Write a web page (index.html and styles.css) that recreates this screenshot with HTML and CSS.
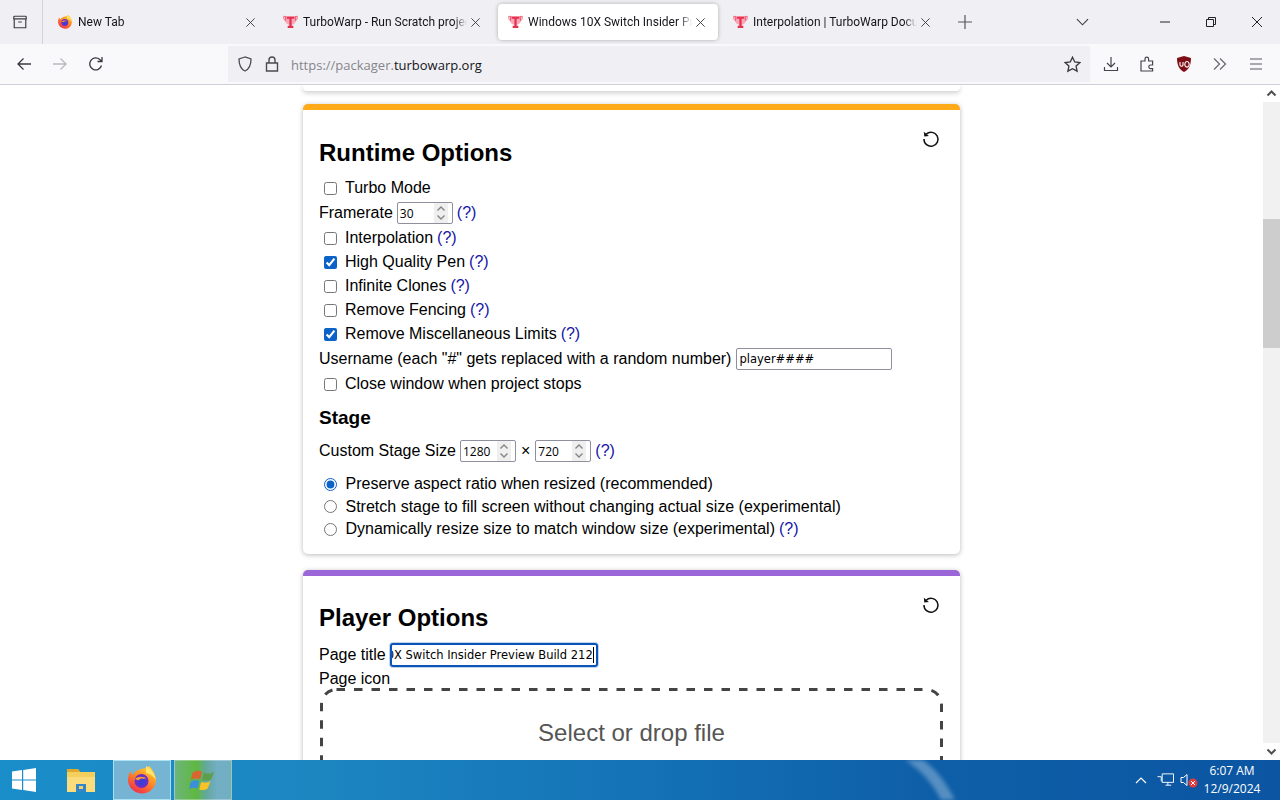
FILE: index.html
```html
<!DOCTYPE html>
<html lang="en">
<head>
<meta charset="utf-8">
<title>Windows 10X Switch Insider Preview Build 212</title>
<link rel="stylesheet" href="styles.css">
</head>
<body>
<svg class="defs" width="0" height="0" aria-hidden="true">
  <defs>
    <linearGradient id="fxg" x1="0.8" y1="0" x2="0.2" y2="1">
      <stop offset="0" stop-color="#ffd43a"/><stop offset="0.45" stop-color="#ff8a24"/><stop offset="1" stop-color="#f0254f"/>
    </linearGradient>
    <symbol id="firefox" viewBox="0 0 32 32">
      <path d="M23 2c3 3 7 8 7 14a14 14 0 1 1-28-1c0-3 1-6 3-8 0 2 1 3 2 4 1-3 4-5 8-6 4-1 6-1 8-3z" fill="url(#fxg)"/>
      <path d="M20 2c4 2 9 7 10 14-2-3-5-6-10-7z" fill="#ffe46a"/>
      <circle cx="15.500" cy="17" r="7" fill="#6a2fc4"/>
      <path d="M9 15c3-3 9-3 12 0-2-1-3 0-5 1-3 1-5 0-7-1z" fill="#ff9a2e"/>
      <circle cx="16" cy="18" r="3.600" fill="#3e3bd6"/>
    </symbol>
    <symbol id="trophy" viewBox="0 0 16 16">
      <path d="M2 1.500h12v4c0 3-2.500 5.500-6 5.500s-6-2.500-6-5.500z" fill="#f9a8b8"/>
      <path d="M.8 2h2v4.500C1.500 6.500.8 5 .8 2zM15.200 2h-2v4.500c1.300 0 2-1.500 2-4.500z" fill="none" stroke="#ef5b74"/>
      <path d="M4 2.500h8v2H9.200v7.500H11v2.500H5V12h1.800V4.500H4z" fill="#e5304f"/>
    </symbol>
    <symbol id="close" viewBox="0 0 12 12">
      <path d="M1.500 1.500l9 9M10.500 1.500l-9 9" fill="none" stroke="#3a3a40" stroke-width="1"/>
    </symbol>
    <symbol id="spin" viewBox="0 0 14 20">
      <path d="M3.500 7.500L7 4l3.500 3.500M3.500 12.500L7 16l3.500-3.500" fill="none" stroke="#858585" stroke-width="1.400"/>
    </symbol>
    <symbol id="reset" viewBox="0 0 18 18">
      <path d="M4.100 4.300A7 7 0 1 1 2 9" fill="none" stroke="#111" stroke-width="1.500"/>
      <path d="M1.800 1.800l.5 4.700 4.600-.6z" fill="#111"/>
    </symbol>
  </defs>
</svg>

<div class="browser">
  <div class="tabbar">
    <div class="tabgroup">
      <svg class="ico16" viewBox="0 0 18 18"><path d="M2.500 5.500h13v10h-13zM3 2.500h12a1 1 0 0 1 1 1v2H2v-2a1 1 0 0 1 1-1zM7 9h4" fill="none" stroke="#3a3a40" stroke-width="1.300"/></svg>
    </div>
    <div class="tabs">
      <div class="tab tab-first">
        <svg class="fav fav-fx"><use href="#firefox"/></svg>
        <span class="tab-title">New Tab</span>
        <svg class="tab-x"><use href="#close"/></svg>
      </div>
      <div class="tab">
        <svg class="fav"><use href="#trophy"/></svg>
        <span class="tab-title">TurboWarp - Run Scratch projects faster</span>
        <svg class="tab-x"><use href="#close"/></svg>
      </div>
      <div class="tab tab-active">
        <svg class="fav"><use href="#trophy"/></svg>
        <span class="tab-title">Windows 10X Switch Insider Preview Build 212</span>
        <svg class="tab-x"><use href="#close"/></svg>
      </div>
      <div class="tab">
        <svg class="fav"><use href="#trophy"/></svg>
        <span class="tab-title">Interpolation | TurboWarp Documentation</span>
        <svg class="tab-x"><use href="#close"/></svg>
      </div>
      <svg class="newtab" viewBox="0 0 14 14"><path d="M7 0v14M0 7h14" stroke="#55555c" stroke-width="1.200"/></svg>
    </div>
    <svg class="alltabs" viewBox="0 0 14 8"><path d="M1 1l6 6 6-6" fill="none" stroke="#3a3a40" stroke-width="1.200"/></svg>
    <div class="winctl">
      <svg class="ctl" viewBox="0 0 46 12"><path d="M18 6h10" stroke="#222" stroke-width="1"/></svg>
      <svg class="ctl" viewBox="0 0 46 12"><path d="M18.500 3.500h7v7h-7zM20.500 3.500v-2h7v7h-2" fill="#f0f0f4" stroke="#222" stroke-width="1"/></svg>
      <svg class="ctl" viewBox="0 0 46 12"><path d="M18 1l10 10M28 1L18 11" stroke="#222" stroke-width="1"/></svg>
    </div>
  </div>

  <div class="toolbar">
    <div class="navbtn"><svg class="ico16" viewBox="0 0 16 16"><path d="M15 8H2M7.500 2.500L2 8l5.500 5.500" fill="none" stroke="#3a3a40" stroke-width="1.300"/></svg></div>
    <div class="navbtn"><svg class="ico16" viewBox="0 0 16 16"><path d="M1 8h13M8.500 2.500L14 8l-5.500 5.500" fill="none" stroke="#b9b9be" stroke-width="1.300"/></svg></div>
    <div class="navbtn"><svg class="ico16" viewBox="0 0 16 16"><path d="M13.500 9.500A6 6 0 1 1 11.800 3.500L14 5.500M14 1v4.500H9.500" fill="none" stroke="#3a3a40" stroke-width="1.300"/></svg></div>
    <div class="urlbar">
      <svg class="url-shield" viewBox="0 0 16 16"><path d="M8 1L2 3c0 6 1.500 10 6 12 4.500-2 6-6 6-12z" fill="none" stroke="#4a4a50" stroke-width="1.300"/></svg>
      <svg class="url-lock" viewBox="0 0 14 16"><path d="M1.500 7h11v8h-11zM4 7V4a3 3 0 0 1 6 0v3" fill="none" stroke="#4a4a50" stroke-width="1.400"/></svg>
      <span class="url"><span class="url-dim">https://packager.</span>turbowarp.org</span>
      <svg class="url-star" viewBox="0 0 16 16"><path d="M8 1.200l2.100 4.400 4.800.6-3.500 3.300.9 4.800L8 12l-4.300 2.300.9-4.800L1.100 6.200l4.800-.6z" fill="none" stroke="#3a3a40" stroke-width="1.300"/></svg>
    </div>
    <div class="actions">
      <svg class="ico16" viewBox="0 0 16 16"><path d="M8 1v9.500M4 7l4 4 4-4M1.500 11v3.500h13V11" fill="none" stroke="#45454b" stroke-width="1.200"/></svg>
      <svg class="ico16" viewBox="0 0 16 16"><path d="M2 5h4V3a1.800 1.800 0 0 1 3.600 0v2h4v4h-2a1.800 1.800 0 0 0 0 3.600h2V15H2z" fill="none" stroke="#45454b" stroke-width="1.200"/></svg>
      <svg class="ico16" viewBox="0 0 16 16"><path d="M8 0l7 2c0 7-2 11.500-7 14C3 13.500 1 9 1 2z" fill="#7d0f14"/><path d="M4 6v2.800a1.500 1.500 0 0 0 3 0V6M11 5.500a2.200 2.800 0 1 0 .01 0z" stroke="#fff" stroke-width="1.100" fill="none"/></svg>
      <svg class="ico16" viewBox="0 0 16 16"><path d="M2 2.500L7.500 8 2 13.500M8 2.500L13.500 8 8 13.500" fill="none" stroke="#6b6b70" stroke-width="1.300"/></svg>
      <svg class="ico16" viewBox="0 0 16 16"><path d="M2 3h12M2 8h12M2 13h12" fill="none" stroke="#5a5a60" stroke-width="1.200"/></svg>
    </div>
  </div>

  <div class="viewport">
    <main class="page">
      <div class="card-prev"></div>

      <section class="card card-orange">
        <svg class="reset"><use href="#reset"/></svg>
        <h2 class="card-title">Runtime Options</h2>
        <label class="row check"><input type="checkbox"><span>Turbo Mode</span></label>
        <div class="row field">
          <span>Framerate</span>
          <span class="num"><span class="num-val">30</span><svg class="spin"><use href="#spin"/></svg></span>
          <a class="help">(?)</a>
        </div>
        <label class="row check"><input type="checkbox"><span>Interpolation</span><a class="help">(?)</a></label>
        <label class="row check"><input type="checkbox" checked><span>High Quality Pen</span><a class="help">(?)</a></label>
        <label class="row check"><input type="checkbox"><span>Infinite Clones</span><a class="help">(?)</a></label>
        <label class="row check"><input type="checkbox"><span>Remove Fencing</span><a class="help">(?)</a></label>
        <label class="row check"><input type="checkbox" checked><span>Remove Miscellaneous Limits</span><a class="help">(?)</a></label>
        <div class="row field field-user">
          <span>Username (each "#" gets replaced with a random number)</span>
          <input class="text-input" type="text" value="player####">
        </div>
        <label class="row check"><input type="checkbox"><span>Close window when project stops</span></label>

        <h3 class="sub-title">Stage</h3>
        <div class="row field">
          <span>Custom Stage Size</span>
          <span class="num"><span class="num-val">1280</span><svg class="spin"><use href="#spin"/></svg></span>
          <span class="times">×</span>
          <span class="num"><span class="num-val">720</span><svg class="spin"><use href="#spin"/></svg></span>
          <a class="help">(?)</a>
        </div>
        <div class="radios">
          <label class="row radio"><input type="radio" name="fit" checked><span>Preserve aspect ratio when resized (recommended)</span></label>
          <label class="row radio"><input type="radio" name="fit"><span>Stretch stage to fill screen without changing actual size (experimental)</span></label>
          <label class="row radio"><input type="radio" name="fit"><span>Dynamically resize size to match window size (experimental)</span><a class="help">(?)</a></label>
        </div>
      </section>

      <section class="card card-purple">
        <svg class="reset"><use href="#reset"/></svg>
        <h2 class="card-title">Player Options</h2>
        <div class="row field">
          <span>Page title</span>
          <span class="title-input"><span class="title-text">Windows 10X Switch Insider Preview Build 212</span></span>
        </div>
        <div class="row label-only">Page icon</div>
        <div class="dropzone">
          <svg class="dz-border" width="623" height="120"><rect x="1.500" y="1.500" width="620" height="117" rx="15" /></svg>
          Select or drop file
        </div>
      </section>
    </main>
    <div class="scrollbar">
      <svg class="sb-arrow" viewBox="0 0 17 17"><path d="M4.500 10.500L8.500 6.500l4 4" fill="none" stroke="#505050" stroke-width="2"/></svg>
      <div class="sb-track"><div class="sb-thumb"></div></div>
      <svg class="sb-arrow" viewBox="0 0 17 17"><path d="M4.500 6.500l4 4 4-4" fill="none" stroke="#505050" stroke-width="2"/></svg>
    </div>
  </div>

  <footer class="taskbar">
    <svg class="streak" viewBox="0 0 70 40"><path d="M0 0h18c14 10 24 24 32 40H36C28 24 16 10 0 0z" fill="#fff" opacity=".3"/></svg>
    <div class="start"><svg class="winlogo" viewBox="0 0 24 24"><path d="M0 3.500l10-1.400v9.300H0zM11.200 2L24 0v11.400H11.200zM0 12.600h10v9.300L0 20.500zM11.200 12.600H24V24l-12.800-2z" fill="#fff"/></svg></div>
    <div class="tb-btn tb-plain">
      <svg class="tb-ico" viewBox="0 0 32 32"><path d="M2 5h11l2 3h15v20H2z" fill="#f5cf5c"/><path d="M2 5h11l2 3H2z" fill="#e0a92c"/><path d="M2 13h28v15H2z" fill="#fbdc7c"/><path d="M11 20h10v8H11z" fill="#2f86c8"/><path d="M14 22h4v3h-4z" fill="#f5cf5c"/></svg>
    </div>
    <div class="tb-btn tb-active"><svg class="tb-ico"><use href="#firefox"/></svg></div>
    <div class="tb-btn tb-green">
      <svg class="tb-ico tb-flag" viewBox="0 0 32 32"><path d="M5 8c4-3 6-2 10-1l-2 8c-4-1-7-1-10 1z" fill="#d9652f"/><path d="M17 8c4 2 7 2 11-1l-3 8c-3 2-6 2-10 1z" fill="#5f9e4a"/><path d="M3 18c3-2 6-2 9-1l-2 8c-3-1-6-1-9 1z" fill="#3a8fd8"/><path d="M14 18c4 1 7 1 10-1l-3 8c-3 2-6 2-9 1z" fill="#f7c326"/></svg>
    </div>
    <div class="tray">
      <svg class="tray-ico tray-up" viewBox="0 0 12 8"><path d="M1 7l5-5 5 5" fill="none" stroke="#fff" stroke-width="1.200"/></svg>
      <svg class="tray-ico tray-net" viewBox="0 0 18 16"><path d="M5.500 1.500h12v9h-12zM0.500 4.500h4v5M9 13.500h6M11.500 10.500v3" fill="none" stroke="#fff" stroke-width="1"/></svg>
      <svg class="tray-ico tray-snd" viewBox="0 0 18 16"><path d="M1 5.500h2.500L7 2.500v11l-3.500-3H1z" fill="none" stroke="#fff"/><circle cx="13" cy="11" r="4.500" fill="#e23b3b"/><path d="M11 9l4 4M15 9l-4 4" stroke="#fff"/></svg>
      <div class="clock"><div>6:07 AM</div><div>12/9/2024</div></div>
    </div>
  </footer>
</div>
</body>
</html>
```

FILE: styles.css
```css
* { box-sizing: border-box; }
html, body { margin: 0; height: 100%; overflow: hidden; }
body { font-family: "Liberation Sans", Arial, sans-serif; background: #fff; color: #000; }
.defs { position: absolute; }

.browser { width: 1280px; height: 800px; display: flex; flex-direction: column; }

/* Tab strip */
.tabbar { height: 44px; flex: none; background: #f0f0f4; display: flex; align-items: center; font-family: Roboto, "Noto Sans", sans-serif; font-size: 12px; color: #15141a; }
.tabgroup { width: 43px; height: 44px; display: flex; align-items: center; padding-left: 12px; border-right: 1px solid #d4d4d8; flex: none; }
.ico16 { width: 16px; height: 16px; display: block; flex: none; }
.tabs { display: flex; align-items: center; gap: 5px; padding-left: 5px; width: 1000px; flex: none; }
.tab { width: 220px; height: 36px; display: flex; align-items: center; padding: 0 12px 0 10px; border-radius: 4px; flex: none; }
.tab-active { background: #fff; box-shadow: 0 0 4px rgba(0,0,0,.28); }
.fav { width: 15px; height: 16px; flex: none; margin-right: 5px; }
.fav-fx { width: 16px; margin-left: -1px; }
.tab-title { flex: 1; min-width: 0; white-space: nowrap; overflow: hidden; -webkit-mask-image: linear-gradient(90deg, #000 92%, transparent); mask-image: linear-gradient(90deg, #000 92%, transparent); }
.tab-x { width: 11px; height: 11px; flex: none; margin-left: 3px; }
.newtab { width: 14px; height: 14px; margin-left: 10px; flex: none; }
.alltabs { width: 13px; height: 8px; margin-left: 33px; flex: none; }
.winctl { display: flex; margin-left: auto; }
.ctl { width: 46px; height: 12px; display: block; }

/* Toolbar */
.toolbar { height: 41px; flex: none; background: #f9f9fb; border-bottom: 1px solid #cfcfd8; display: flex; align-items: center; padding-left: 6px; }
.navbtn { width: 36px; height: 36px; display: flex; align-items: center; justify-content: center; flex: none; }
.urlbar { width: 862px; height: 36px; margin-left: 114px; background: #f0f0f4; display: flex; align-items: center; font-family: "Open Sans", "Noto Sans", sans-serif; font-size: 13px; color: #15141a; flex: none; }
.url-shield { width: 16px; height: 16px; margin-left: 9px; flex: none; }
.url-lock { width: 14px; height: 16px; margin-left: 12px; flex: none; }
.url { margin-left: 12px; flex: 1; padding-top: 2px; }
.url-dim { color: #85858b; }
.url-star { width: 17px; height: 17px; margin-right: 9px; flex: none; }
.actions { display: flex; gap: 20.250px; margin-left: 13px; align-items: center; }

/* Page viewport */
.viewport { flex: 1; min-height: 0; display: flex; background: #fff; overflow: hidden; }
.page { flex: 1; min-width: 0; overflow: hidden; }
.card-prev { width: 657px; height: 6px; margin: 0 auto 13px; border-radius: 0 0 4px 4px; box-shadow: 0 2px 5px rgba(0,0,0,.2); background: #fff; }

.card { position: relative; width: 657px; margin: 0 auto 16px; padding: 29px 16px 13px; background: #fff; border-radius: 5px; box-shadow: 0 1px 5px rgba(0,0,0,.28); font-size: 16px; }
.card-orange { border-top: 6px solid #ffab19; }
.card-purple { border-top: 6px solid #9a66d8; padding-top: 28px; }
.card-title { margin: 0 0 9px; font-size: 24px; line-height: 28px; font-weight: 700; }
.card-purple .card-title { margin-bottom: 10px; }
.reset { position: absolute; top: 20px; right: 20px; width: 18px; height: 18px; }
.sub-title { margin: 9.500px 0 9.500px; font-size: 19px; line-height: 23px; font-weight: 700; }

.row { display: flex; align-items: center; white-space: pre; }
.check { height: 24px; }
.check input { width: 13px; height: 13px; margin: 0 8.500px 0 4.500px; accent-color: #0b62c8; flex: none; }
.field { height: 26px; gap: 4px; }
.field-user { gap: 5px; }
.radios { margin-top: 9px; }
.radio { height: 22.500px; }
.radio input { width: 13px; height: 13px; margin: 0 8.500px 0 5px; accent-color: #0b62c8; flex: none; }
.help { color: #1414a8; }
.check .help, .radio .help { margin-left: 4px; }
.label-only { height: 22px; }

.num { width: 56px; height: 22px; display: flex; align-items: center; justify-content: space-between; border: 1px solid #8f8f9d; border-radius: 2px; padding: 0 4px 0 2px; background: #fff; font-family: "Open Sans", "Noto Sans", sans-serif; font-size: 12px; }
.spin { width: 14px; height: 20px; background: #efefef; }
.times { margin: 0 1px 0 1px; }
.text-input { width: 156px; height: 22px; margin-left: 0; padding: 0 2px; border: 1px solid #8f8f9d; border-radius: 2px; font-family: "DejaVu Sans", sans-serif; font-size: 11.500px; color: #000; background: #fff; }
.title-input { width: 208px; height: 24px; display: flex; justify-content: flex-end; align-items: center; overflow: hidden; padding: 0 2px; border: 2px solid #0b54b8; border-radius: 3px; box-shadow: 0 0 0 1px rgba(11,84,184,.25); font-family: "DejaVu Sans", sans-serif; font-size: 11.500px; }
.title-text { flex: none; border-right: 1px solid #000; line-height: 16px; }

.dropzone { position: relative; height: 120px; padding-top: 27px; text-align: center; font-size: 24px; line-height: 36px; color: #555; margin: -2px 1px 0; }
.dz-border { position: absolute; left: 0; top: 0; fill: none; stroke: #444; stroke-width: 3; stroke-dasharray: 8.500 9; }

/* Scrollbar */
.scrollbar { width: 17px; flex: none; background: #fff; display: flex; flex-direction: column; }
.sb-arrow { width: 17px; height: 17px; display: block; flex: none; }
.sb-track { flex: 1; background: #f1f1f1; padding-top: 117px; }
.sb-thumb { height: 129px; background: #cdcdcd; }

/* Taskbar */
.taskbar { position: relative; height: 40px; flex: none; display: flex; align-items: stretch; background: linear-gradient(90deg, #1a8ec9 0, #1c86c1 25%, #1472b6 50%, #0e5fa8 72%, #0b55a2 100%); }
.streak { position: absolute; left: 905px; top: 0; width: 70px; height: 40px; filter: blur(2px); }
.start { width: 47px; display: flex; align-items: center; justify-content: center; }
.winlogo { width: 24px; height: 24px; }
.tb-btn { width: 58px; display: flex; align-items: center; justify-content: center; margin-right: 3px; }
.tb-plain { margin-left: 5px; }
.tb-ico { width: 32px; height: 32px; }
.tb-flag { width: 30px; height: 30px; }
.tb-active { background: #76b4d4; border: 1px solid #a9e0f2; }
.tb-green { background: linear-gradient(90deg, #6db57a, #5fb840 38%, #63a89a 55%, #72aec4 75%); border: 1px solid rgba(255,255,255,.3); }
.tray { position: relative; margin-left: auto; display: flex; align-items: center; padding-right: 17px; color: #fff; font-family: "Open Sans", "Noto Sans", sans-serif; font-size: 12px; }
.tray-ico { display: block; flex: none; }
.tray-up { width: 12px; height: 8px; }
.tray-net { width: 17px; height: 16px; margin-left: 10px; }
.tray-snd { width: 18px; height: 16px; margin-left: 6px; }
.clock { margin-left: 3px; width: 62px; text-align: center; line-height: 18px; }
```
